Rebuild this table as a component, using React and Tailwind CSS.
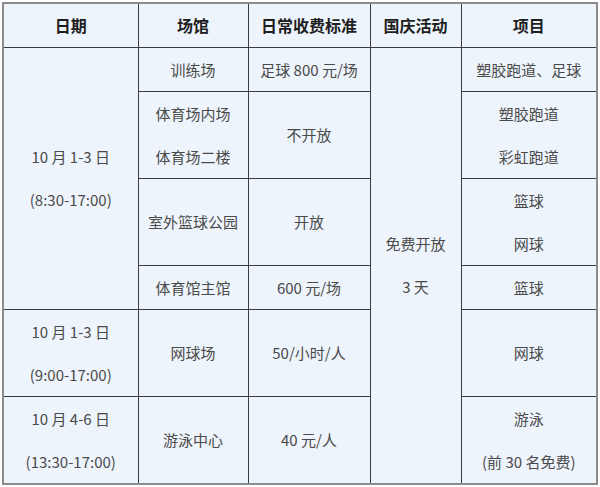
import React from "react";

const cell = "border border-[#3c3c3c] p-0 text-center align-middle";
const body = "text-[15px] text-[#4a4a4a] leading-[43px]";

function P({ children }) {
  return <div className={body}>{children}</div>;
}

export default function App() {
  return (
    <div className="w-[600px] h-[487px] bg-white pt-[2px] pl-[2px]" style={{ fontFamily: '"Noto Sans CJK SC", "Noto Sans", sans-serif' }}>
      <table className="w-[594px] table-fixed border-collapse border-2 border-[#8c8c8c] bg-[#eef4fc]">
        <colgroup>
          <col className="w-[135px]" />
          <col className="w-[110px]" />
          <col className="w-[122px]" />
          <col className="w-[91px]" />
          <col className="w-[136px]" />
        </colgroup>
        <thead>
          <tr className="h-[44px]">
            {["日期", "场馆", "日常收费标准", "国庆活动", "项目"].map((h) => (
              <th key={h} className={`${cell} text-[16px] font-bold text-[#1e1e1e]`}>{h}</th>
            ))}
          </tr>
        </thead>
        <tbody>
          <tr className="h-[43px]">
            <td rowSpan={4} className={cell}>
              <P>10 月 1-3 日</P>
              <P>(8:30-17:00)</P>
            </td>
            <td className={cell}><P>训练场</P></td>
            <td className={cell}><P>足球 800 元/场</P></td>
            <td rowSpan={6} className={cell}>
              <P>免费开放</P>
              <P>3 天</P>
            </td>
            <td className={cell}><P>塑胶跑道、足球</P></td>
          </tr>
          <tr className="h-[87px]">
            <td className={cell}>
              <P>体育场内场</P>
              <P>体育场二楼</P>
            </td>
            <td className={cell}><P>不开放</P></td>
            <td className={cell}>
              <P>塑胶跑道</P>
              <P>彩虹跑道</P>
            </td>
          </tr>
          <tr className="h-[87px]">
            <td className={cell}><P>室外篮球公园</P></td>
            <td className={cell}><P>开放</P></td>
            <td className={cell}>
              <P>篮球</P>
              <P>网球</P>
            </td>
          </tr>
          <tr className="h-[44px]">
            <td className={cell}><P>体育馆主馆</P></td>
            <td className={cell}><P>600 元/场</P></td>
            <td className={cell}><P>篮球</P></td>
          </tr>
          <tr className="h-[87px]">
            <td className={cell}>
              <P>10 月 1-3 日</P>
              <P>(9:00-17:00)</P>
            </td>
            <td className={cell}><P>网球场</P></td>
            <td className={cell}><P>50/小时/人</P></td>
            <td className={cell}><P>网球</P></td>
          </tr>
          <tr className="h-[87px]">
            <td className={cell}>
              <P>10 月 4-6 日</P>
              <P>(13:30-17:00)</P>
            </td>
            <td className={cell}><P>游泳中心</P></td>
            <td className={cell}><P>40 元/人</P></td>
            <td className={cell}>
              <P>游泳</P>
              <P>(前 30 名免费)</P>
            </td>
          </tr>
        </tbody>
      </table>
    </div>
  );
}
